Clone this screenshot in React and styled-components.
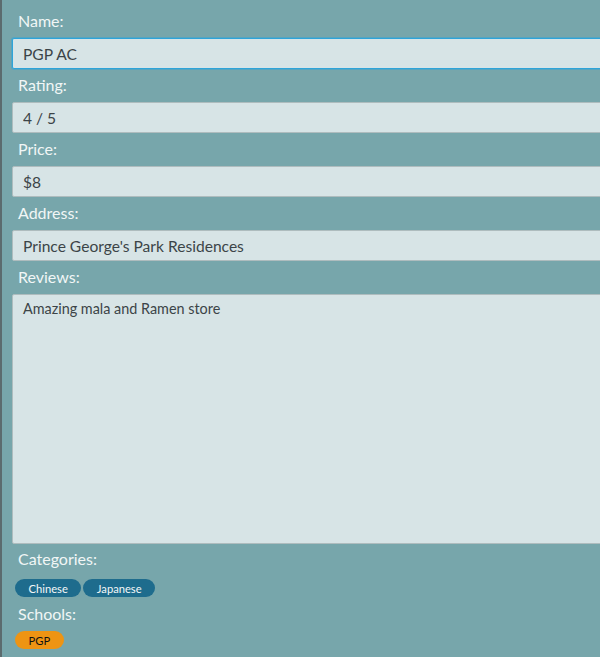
import React from 'react';
import styled, { createGlobalStyle } from 'styled-components';

const GlobalStyle = createGlobalStyle`
  html, body {
    margin: 0;
    padding: 0;
    background: #77a6ab;
    overflow: hidden;
  }
  body {
    font-family: Lato, "Liberation Sans", sans-serif;
  }
`;

const Page = styled.div`
  width: 640px;
  height: 657px;
  box-sizing: border-box;
  border-left: 2px solid #5b6b6e;
  background: #77a6ab;
  padding: 5px 0 0 10px;
`;

const Label = styled.div`
  color: #f1f6f6;
  font-size: 16px;
  line-height: 20px;
  margin: ${(p) => p.$top || 6}px 0 ${(p) => p.$bottom || 7}px 6px;
`;

const Field = styled.input`
  display: block;
  width: 100%;
  height: 31px;
  box-sizing: border-box;
  border: 1px solid ${(p) => (p.$focused ? '#2ea4d9' : '#aebcbe')};
  box-shadow: ${(p) => (p.$focused ? '0 0 0 1px rgba(46,164,217,0.45)' : 'none')};
  border-radius: 2px;
  background: #d7e4e6;
  color: #3c4448;
  font-family: Lato, "Liberation Sans", sans-serif;
  font-size: 15.6px;
  padding: 0 10px;
  outline: none;
`;

const Reviews = styled.textarea`
  display: block;
  width: 100%;
  height: 250px;
  box-sizing: border-box;
  border: 1px solid #aebcbe;
  border-radius: 2px;
  background: #d7e4e6;
  color: #3c4448;
  font-family: Lato, "Liberation Sans", sans-serif;
  font-size: 14.4px;
  line-height: 17px;
  padding: 5px 10px;
  resize: none;
  outline: none;
`;

const ChipRow = styled.div`
  display: flex;
  gap: 2px;
  margin-left: 3px;
`;

const Chip = styled.span`
  display: inline-flex;
  align-items: center;
  height: 18px;
  padding: 0 13.5px;
  border-radius: 9px;
  font-size: 11.2px;
  background: ${(p) => (p.$kind === 'school' ? '#ee9413' : '#1e6c8d')};
  color: ${(p) => (p.$kind === 'school' ? '#111' : '#f3f7f8')};
`;

const fields = [
  { label: 'Name:', value: 'PGP AC', focused: true },
  { label: 'Rating:', value: '4 / 5' },
  { label: 'Price:', value: '$8' },
  { label: 'Address:', value: "Prince George's Park Residences" },
];

export default function App() {
  return (
    <>
      <GlobalStyle />
      <Page>
        {fields.map((f) => (
          <React.Fragment key={f.label}>
            <Label>{f.label}</Label>
            <Field readOnly defaultValue={f.value} $focused={f.focused} />
          </React.Fragment>
        ))}
        <Label>Reviews:</Label>
        <Reviews readOnly defaultValue="Amazing mala and Ramen store" />
        <Label $top={5} $bottom={10}>Categories:</Label>
        <ChipRow>
          <Chip>Chinese</Chip>
          <Chip>Japanese</Chip>
        </ChipRow>
        <Label $top={7} $bottom={7}>Schools:</Label>
        <ChipRow>
          <Chip $kind="school">PGP</Chip>
        </ChipRow>
      </Page>
    </>
  );
}
